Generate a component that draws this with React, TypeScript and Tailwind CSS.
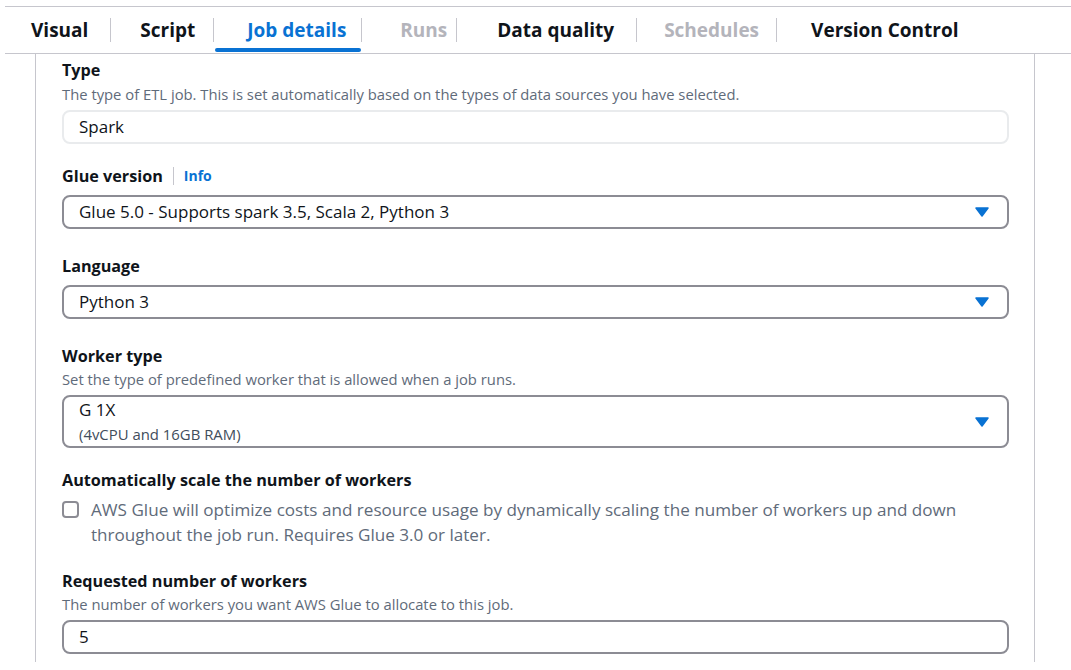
import React from "react";

const font = { fontFamily: '"Open Sans", "Liberation Sans", sans-serif' };

function Caret() {
  return (
    <svg width="14" height="10" viewBox="0 0 14 10" className="shrink-0">
      <path d="M1 1 H13 L7 9 Z" fill="#0972d3" stroke="#0972d3" strokeWidth="1.5" strokeLinejoin="round" />
    </svg>
  );
}

function Label({ children }: { children: React.ReactNode }) {
  return <div className="text-[16.2px] leading-[20px] font-bold text-[#0f141a]">{children}</div>;
}

function Desc({ children, className = "" }: { children: React.ReactNode; className?: string }) {
  return <div className={"text-[14.8px] leading-[18px] text-[#5f6b7a] " + className}>{children}</div>;
}

function Select({ value }: { value: string }) {
  return (
    <div className="mt-[9px] h-[34px] border-2 border-[#8c8c94] rounded-[8px] flex items-center pl-[15px] pr-[18px]">
      <span className="flex-1 text-[17px] text-[#0f141a]">{value}</span>
      <Caret />
    </div>
  );
}

const tabs = [
  { t: "Visual", s: "normal", c: "pl-[26px] pr-[22px]" },
  { t: "Script", s: "normal", c: "pl-[29px] pr-[18px]" },
  { t: "Job details", s: "active", c: "pl-[33px] pr-[15px]" },
  { t: "Runs", s: "disabled", c: "pl-[38px] pr-[9px]" },
  { t: "Data quality", s: "normal", c: "pl-[40px] pr-[22px]" },
  { t: "Schedules", s: "disabled", c: "pl-[27px] pr-[17px]" },
  { t: "Version Control", s: "normal", c: "pl-[34px] pr-[20px]" },
];

export default function App() {
  return (
    <div className="w-[1071px] h-[670px] bg-white overflow-hidden" style={font}>
      <div className="mt-[6px] ml-[5px] border-t border-b border-[#c6c6cd] h-[48px] flex items-stretch">
        {tabs.map((tab, i) => (
          <div key={tab.t} className="flex items-center">
            {i > 0 && <div className="w-px h-[24px] bg-[#c6c6cd]" />}
            <div
              className={
                "relative h-full flex items-center text-[19px] font-bold " +
                tab.c +
                " " +
                (tab.s === "active"
                  ? "text-[#0972d3]"
                  : tab.s === "disabled"
                  ? "text-[#b4b4bb]"
                  : "text-[#0f141a]")
              }
            >
              {tab.t}
              {tab.s === "active" && (
                <div className="absolute left-[1px] right-0 bottom-[1px] h-[4px] rounded-[2px] bg-[#0972d3]" />
              )}
            </div>
          </div>
        ))}
      </div>
      <div className="ml-[35px] w-[1000px] h-[608px] border-l border-r border-[#c6c6cd] pl-[26px] pr-[25px] pt-[6px]">
        <Label>Type</Label>
        <Desc className="mt-[5px]">
          The type of ETL job. This is set automatically based on the types of data sources you have selected.
        </Desc>
        <div className="mt-[7px] h-[34px] border-2 border-[#e9ebed] rounded-[8px] flex items-center pl-[15px] text-[17px] text-[#0f141a]">
          Spark
        </div>

        <div className="mt-[22px] flex items-center">
          <Label>Glue version</Label>
          <div className="w-px h-[18px] bg-[#c6c6cd] mx-[10px]" />
          <span className="text-[14px] leading-[20px] font-bold text-[#0972d3]">Info</span>
        </div>
        <Select value="Glue 5.0 - Supports spark 3.5, Scala 2, Python 3" />

        <div className="mt-[27px]">
          <Label>Language</Label>
        </div>
        <Select value="Python 3" />

        <div className="mt-[27px]">
          <Label>Worker type</Label>
        </div>
        <Desc className="mt-[4px]">Set the type of predefined worker that is allowed when a job runs.</Desc>
        <div className="mt-[7px] h-[53px] border-2 border-[#8c8c94] rounded-[8px] flex items-center pl-[15px] pr-[18px]">
          <div className="flex-1">
            <div className="text-[17px] leading-[20px] text-[#0f141a]">G 1X</div>
            <div className="text-[14.9px] leading-[20px] text-[#414d5c] mt-[4px]">(4vCPU and 16GB RAM)</div>
          </div>
          <Caret />
        </div>

        <div className="mt-[22px]">
          <Label>Automatically scale the number of workers</Label>
        </div>
        <div className="mt-[7px] flex items-start">
          <div className="mt-[4px] w-[17px] h-[17px] border-2 border-[#8c8c94] rounded-[4px] shrink-0" />
          <div className="ml-[12px] text-[17.1px] leading-[25px] text-[#5f6b7a] w-[900px]">
            AWS Glue will optimize costs and resource usage by dynamically scaling the number of workers up and down
            throughout the job run. Requires Glue 3.0 or later.
          </div>
        </div>

        <div className="mt-[24px]">
          <Label>Requested number of workers</Label>
        </div>
        <Desc className="mt-[4px]">The number of workers you want AWS Glue to allocate to this job.</Desc>
        <div className="mt-[7px] h-[34px] border-2 border-[#8c8c94] rounded-[8px] flex items-center pl-[15px] text-[17px] text-[#0f141a]">
          5
        </div>
      </div>
    </div>
  );
}
